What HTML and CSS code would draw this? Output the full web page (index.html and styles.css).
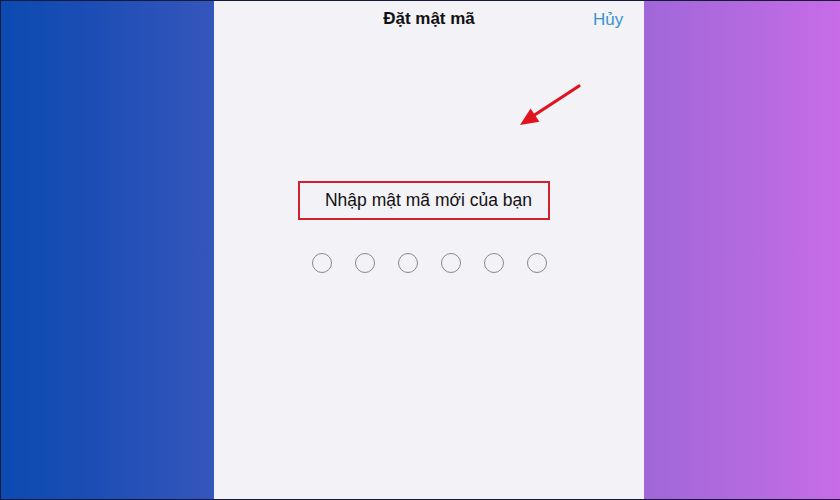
FILE: index.html
```html
<!DOCTYPE html>
<html lang="vi">
<head>
<meta charset="utf-8">
<title>Đặt mật mã</title>
<link rel="stylesheet" href="styles.css">
</head>
<body>
<div class="frame">
  <div class="side side-left"></div>
  <div class="phone">
    <div class="header">
      <div class="title">Đặt mật mã</div>
      <div class="cancel">Hủy</div>
    </div>
    <div class="content">
      <div class="prompt">Nhập mật mã mới của bạn</div>
      <div class="dots">
        <span class="dot"></span><span class="dot"></span><span class="dot"></span><span class="dot"></span><span class="dot"></span><span class="dot"></span>
      </div>
    </div>
    <svg class="arrow" width="80" height="60" viewBox="0 0 80 60">
      <line x1="65" y1="5" x2="19" y2="35" stroke="#e0141e" stroke-width="3.2" stroke-linecap="round"/>
      <polygon points="6,44 16.6,27.4 25.4,40.8" fill="#e0141e"/>
    </svg>
  </div>
  <div class="side side-right"></div>
</div>
</body>
</html>
```
FILE: styles.css
```css
* { box-sizing: border-box; }
html, body { margin: 0; padding: 0; }
body {
  width: 840px;
  height: 500px;
  font-family: "Liberation Sans", Arial, sans-serif;
  background: #0d1230;
}
.frame {
  display: flex;
  width: 840px;
  height: 500px;
  border: 1px solid #151a3a;
  border-right-width: 0;
}
.side { height: 100%; }
.side-left {
  width: 213px;
  background: linear-gradient(to right, #0a4bb1, #1b4db4 40%, #3556bc);
}
.side-right {
  width: 196px;
  background: linear-gradient(to right, #a067d8, #b66ae0 60%, #c86ce8);
}
.phone {
  position: relative;
  width: 431px;
  height: 100%;
  background: #f2f2f7;
  display: flex;
  flex-direction: column;
  align-items: center;
}
.header {
  width: 100%;
  height: 38px;
  display: flex;
  align-items: center;
  justify-content: center;
  position: relative;
  padding-bottom: 2px;
}
.title {
  font-size: 17px;
  font-weight: bold;
  color: #111;
}
.cancel {
  position: absolute;
  right: 21px;
  top: 9px;
  font-size: 17px;
  color: #3a93cc;
}
.content {
  display: flex;
  flex-direction: column;
  align-items: center;
  padding-top: 142px;
}
.prompt {
  width: 252px;
  height: 39px;
  margin-left: -10px;
  border: 2.5px solid #d0222c;
  font-size: 17.5px;
  color: #111;
  display: flex;
  align-items: center;
  padding-left: 25px;
  padding-bottom: 1px;
}
.dots {
  display: flex;
  gap: 23px;
  margin-top: 33px;
  margin-left: 1px;
}
.dot {
  width: 20px;
  height: 20px;
  border: 1.5px solid #88888d;
  border-radius: 50%;
}
.arrow {
  position: absolute;
  left: 300px;
  top: 80px;
}
```
